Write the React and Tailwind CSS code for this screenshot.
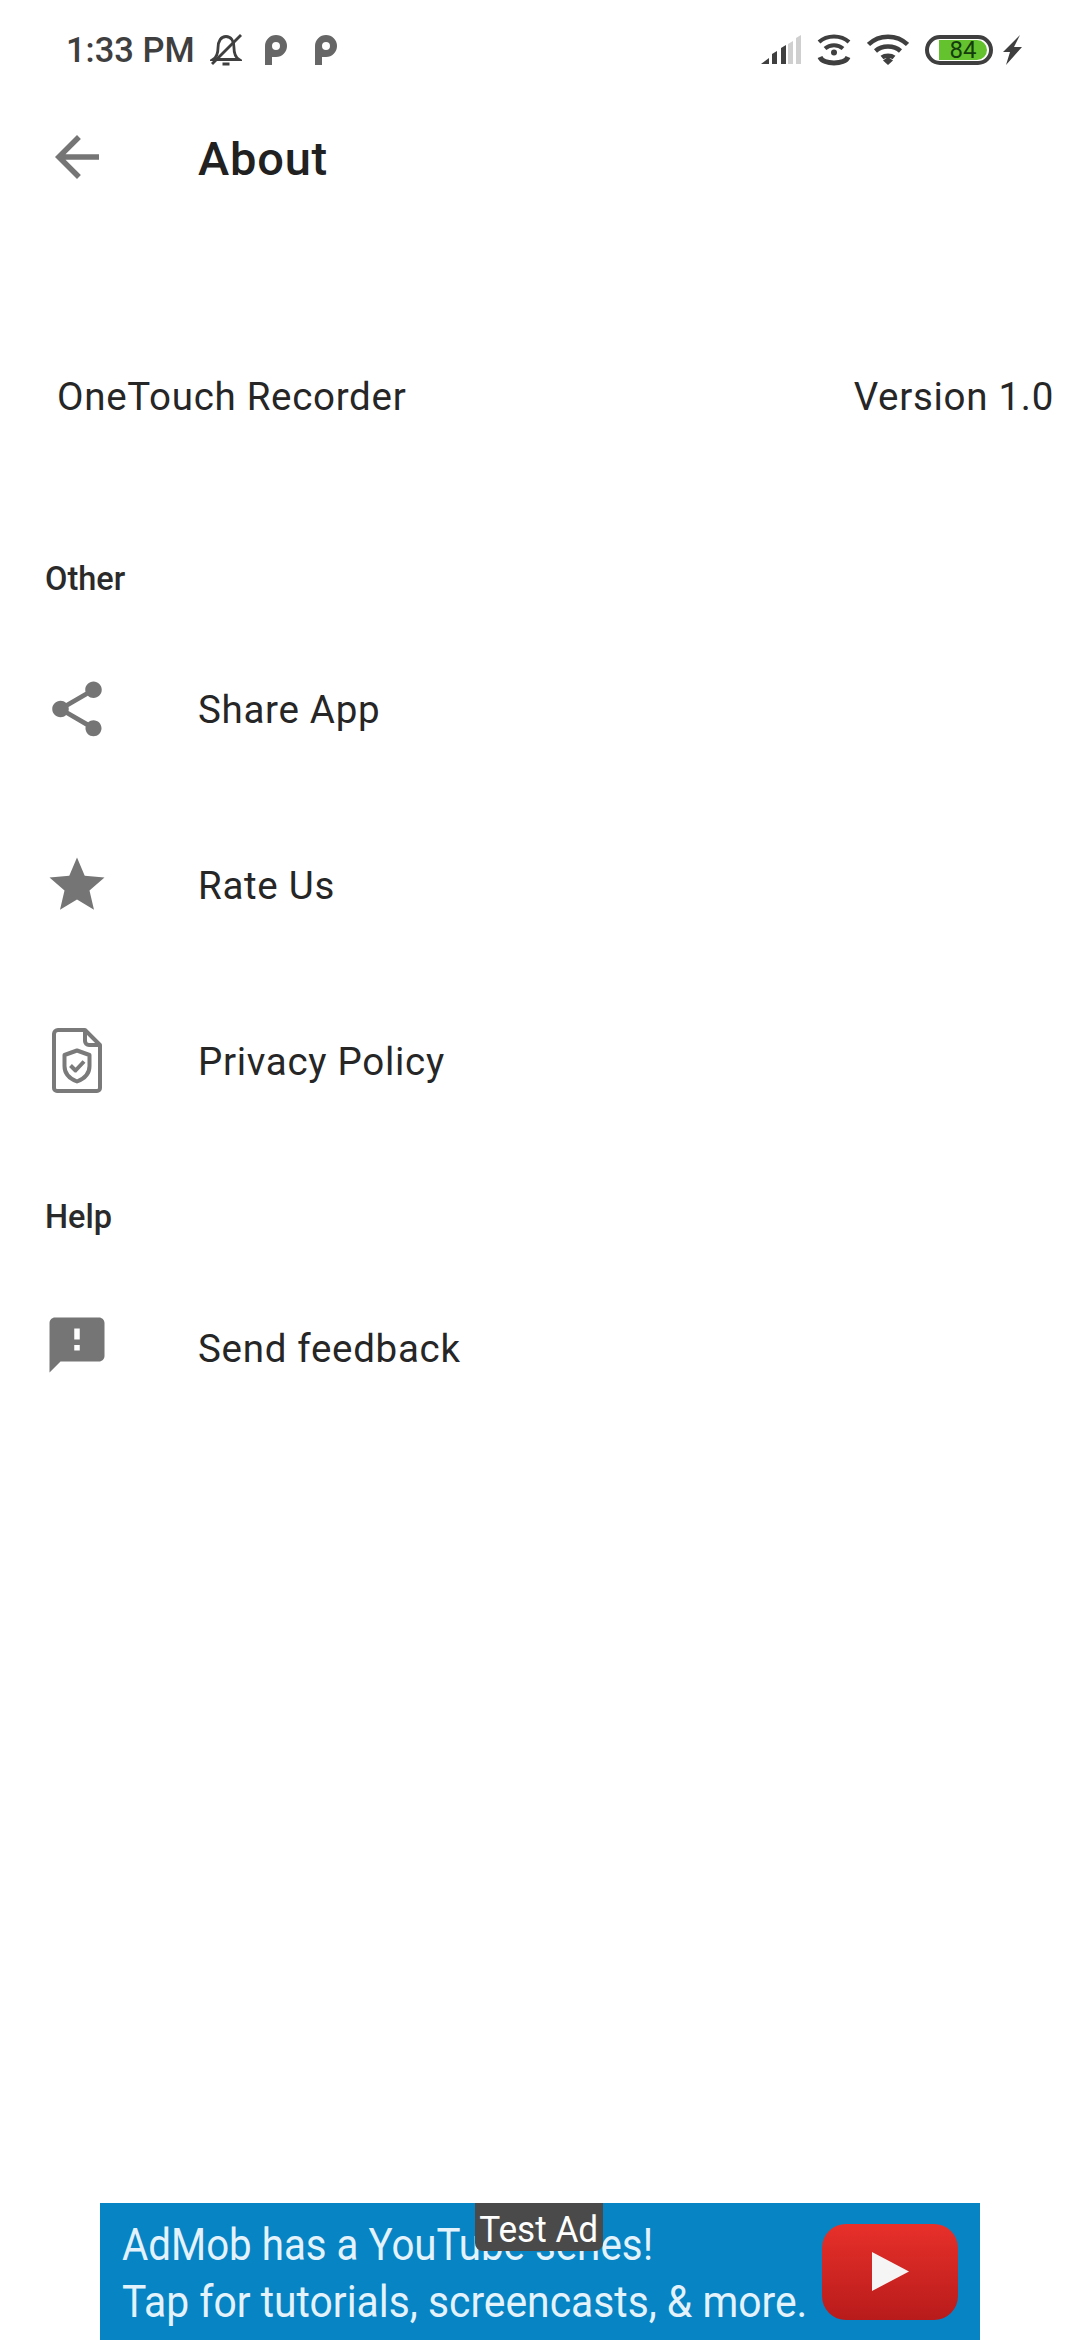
const font = { fontFamily: "Roboto, sans-serif" };

function Icon({ d }) {
	return (
		<svg viewBox="0 0 24 24" className="w-[66px] h-[66px] fill-[#757575] shrink-0">
			<path d={d} />
		</svg>
	);
}

function PrivacyIcon() {
	return (
		<svg viewBox="0 0 66 66" className="w-[66px] h-[66px] shrink-0" fill="none" stroke="#7a7a7a" strokeWidth="4" strokeLinejoin="round">
			<path d="M14 2H41L56 17V60a3 3 0 0 1-3 3H13a3 3 0 0 1-3-3V6a4 4 0 0 1 4-4z" />
			<path d="M41 2V13a4 4 0 0 0 4 4H56" />
			<path d="M33 22.500L45.500 27V38C45.500 45 41 50.500 33 53.500C25 50.500 20.500 45 20.500 38V27z" />
			<path d="M26.500 37.500L31.500 42.500L40 33.500" />
		</svg>
	);
}

function ListRow({ icon, label, textPad = "pt-[3px]" }) {
	return (
		<div className="h-[176px] flex items-center pl-[44px]">
			{icon}
			<span className={`ml-[88px] ${textPad} text-[38.5px] tracking-[0.7px] text-[#262626]`}>{label}</span>
		</div>
	);
}

function StatusBar() {
	return (
		<div className="h-[99px] flex items-center justify-between pl-[66px] pr-[58px] text-[#3f3f3f]">
			<div className="flex items-center">
				<span className="pt-[2px] text-[34.5px] font-medium">1:33 PM</span>
				<svg viewBox="0 0 32 34" className="w-[32px] h-[34px] ml-[15px]" fill="none" stroke="#3f3f3f" strokeWidth="2.8">
					<path d="M3 26.500C7 24 8 20 8 15C8 8 11 3.500 16 3.500C21 3.500 24 8 24 15C24 20 25 24 29 26.500z" />
					<path d="M2 31L31 2" />
					<path d="M12.500 31H19.500" strokeWidth="3" />
				</svg>
				<svg viewBox="0 0 22 30" className="w-[22px] h-[30px] ml-[23px]">
					<path d="M0 30V11a11 11 0 1 1 11 11H7v8z M7 11a4 4 0 1 0 8 0a4 4 0 1 0-8 0z" fill="#666666" fillRule="evenodd" />
				</svg>
				<svg viewBox="0 0 22 30" className="w-[22px] h-[30px] ml-[28px]">
					<path d="M0 30V11a11 11 0 1 1 11 11H7v8z M7 11a4 4 0 1 0 8 0a4 4 0 1 0-8 0z" fill="#666666" fillRule="evenodd" />
				</svg>
			</div>
			<div className="flex items-center">
				<svg viewBox="0 0 40 30" className="w-[40px] h-[30px]">
					<path d="M0 29L8 23V29z" fill="#3f3f3f" />
					<path d="M11 29V19L16 16V29z" fill="#3f3f3f" />
					<path d="M20 29V13L25 10V29z" fill="#3f3f3f" />
					<path d="M27 29V9L32 6V29z" fill="#cfcfcf" />
					<path d="M35 29V3L40 0V29z" fill="#cfcfcf" />
				</svg>
				<svg viewBox="0 0 34 32" className="w-[34px] h-[32px] ml-[16px]" fill="none" stroke="#3f3f3f" strokeWidth="4">
					<path d="M2 8C10 0.500 24 0.500 32 8" />
					<path d="M8 14.500C13 10 21 10 26 14.500" />
					<circle cx="17" cy="18.500" r="3" fill="#3f3f3f" stroke="none" />
					<path d="M3 23C6 31 28 31 31 23" strokeWidth="5" />
				</svg>
				<svg viewBox="0 0 42 32" className="w-[42px] h-[32px] ml-[16px]" fill="none" stroke="#3f3f3f" strokeWidth="4.500">
					<path d="M1.500 10.500C12 0 30 0 40.500 10.500" />
					<path d="M8.500 17C15 11 27 11 33.500 17" />
					<path d="M15 23.500C18 21 24 21 27 23.500" />
					<path d="M16 26.500L21 31L26 26.500L21 23z" fill="#3f3f3f" stroke="none" />
				</svg>
				<div className="ml-[16px] w-[68px] h-[30px] rounded-full border-[4px] border-[#3f3f3f] flex items-center pl-[10px]">
					<div className="w-[48px] h-[20px] rounded-l-[3px] rounded-r-full bg-[#64c22e] flex items-center justify-center text-[24px] leading-none text-[#143c0c]">
						84
					</div>
				</div>
				<svg viewBox="0 0 20 30" className="w-[20px] h-[30px] ml-[9px]">
					<path d="M18 0L1 17H8L4 30L20 12H12z" fill="#3f3f3f" />
				</svg>
			</div>
		</div>
	);
}

export default function App() {
	return (
		<div className="relative w-[1080px] h-[2340px] bg-white flex flex-col overflow-hidden" style={font}>
			<StatusBar />

			{/* toolbar */}
			<div className="h-[116px] flex items-center pl-[44px]">
				<Icon d="M20 11H7.830l5.590-5.590L12 4l-8 8 8 8 1.410-1.410L7.830 13H20v-2z" />
				<span className="ml-[88px] pt-[2px] text-[47px] tracking-[0.8px] font-medium text-[#212121] leading-none">About</span>
			</div>

			{/* app version */}
			<div className="mt-[153px] flex justify-between pl-[57px] pr-[26px] text-[38.5px] tracking-[0.7px] text-[#262626]">
				<span>OneTouch Recorder</span>
				<span>Version 1.0</span>
			</div>

			<div className="mt-[130px] pl-[45px] text-[32.5px] font-medium text-[#2a2a2a] leading-[46px]">Other</div>
			<div className="mt-[19px]">
				<ListRow
					label="Share App"
					icon={<Icon d="M18 16.080c-.76 0-1.440.3-1.960.77L8.910 12.700c.05-.23.09-.46.09-.7s-.04-.47-.09-.7l7.050-4.110c.54.5 1.250.81 2.040.81 1.660 0 3-1.340 3-3s-1.340-3-3-3-3 1.340-3 3c0 .24.04.47.09.7L8.040 9.810C7.500 9.310 6.790 9 6 9c-1.660 0-3 1.340-3 3s1.340 3 3 3c.79 0 1.500-.31 2.040-.81l7.120 4.160c-.05.21-.08.43-.08.65 0 1.610 1.310 2.920 2.920 2.920 1.610 0 2.920-1.310 2.920-2.920s-1.310-2.920-2.920-2.920z" />}
				/>
				<ListRow
					label="Rate Us"
					icon={<Icon d="M12 17.270L18.180 21l-1.640-6.970L22 9.240l-7.190-.61L12 2 9.190 8.630 2 9.240l5.460 4.790L5.820 21z" />}
				/>
				<ListRow label="Privacy Policy" icon={<PrivacyIcon />} />
			</div>

			<div className="mt-[45px] pl-[45px] text-[32.5px] font-medium text-[#2a2a2a] leading-[46px]">Help</div>
			<div className="mt-[17px]">
				<ListRow
					label="Send feedback"
					textPad="pt-[8px]"
					icon={<Icon d="M20 2H4c-1.100 0-1.990.9-1.990 2L2 22l4-4h14c1.100 0 2-.9 2-2V4c0-1.100-.9-2-2-2zm-7 12h-2v-2h2v2zm0-4h-2V6h2v4z" />}
				/>
			</div>

			{/* ad banner */}
			<div className="relative mt-auto mx-auto w-[880px] h-[137px] bg-[#0684c4] flex items-center">
				<div className="pl-[22px] pt-[3px] w-[722px] text-[#e3f2fb] text-[45px] leading-[57px] whitespace-nowrap">
					<div className="origin-left scale-x-[0.895]">AdMob has a YouTube series!</div>
					<div className="origin-left scale-x-[0.907]">Tap for tutorials, screencasts, &amp; more.</div>
				</div>
				<div className="w-[136px] h-[96px] rounded-[24px] bg-gradient-to-b from-[#e8302a] to-[#b81b1b] flex items-center justify-center">
					<svg viewBox="0 0 37 39" className="w-[37px] h-[39px]">
						<path d="M0 0L37 19.500L0 39z" fill="#f5f5f5" />
					</svg>
				</div>
				<div className="absolute top-0 left-[375px] w-[128px] h-[48px] rounded-b-[8px] bg-[#4a4a4a] text-white text-[37px] pt-[5px] flex items-center justify-center whitespace-nowrap">
					<span className="scale-x-[0.95]">Test Ad</span>
				</div>
			</div>
		</div>
	);
}
